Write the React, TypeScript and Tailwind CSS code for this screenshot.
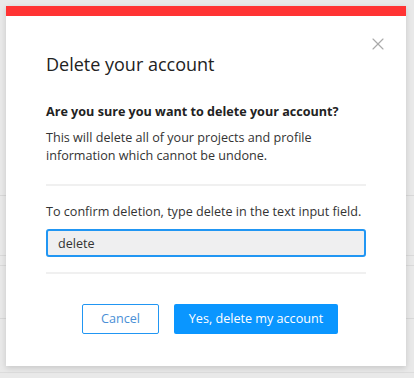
import { X } from 'lucide-react';

export default function App() {
  return (
    <div className="relative h-[378px] w-[414px] overflow-hidden bg-[#e9e9e9] font-['Open_Sans',sans-serif]">
      {/* faint page lines behind the modal */}
      <div className="absolute left-0 right-0 top-[195px] h-px bg-[#d8d8d8]" />
      <div className="absolute left-0 right-0 top-[255px] h-px bg-[#dadada]" />
      <div className="absolute left-0 right-0 top-[265px] h-px bg-[#dadada]" />
      <div className="absolute left-0 right-0 top-[318px] h-px bg-[#d8d8d8]" />
      <div className="absolute left-0 right-0 top-[372px] h-px bg-[#dcdcdc]" />

      <div className="relative ml-[6px] mt-[6px] w-[400px] bg-white shadow-[0_2px_6px_rgba(0,0,0,0.15)]">
        <div className="h-[10px] bg-[#ff3333]" />
        <button className="absolute right-[18px] top-[28px] text-[#aaaaaa]">
          <X size={20} strokeWidth={1.4} />
        </button>
        <div className="flex flex-col px-[40px] pb-[32px] pt-[34px] text-[12.6px] leading-[20px] text-[#333]">
          <h2 className="text-[18px] leading-[28px] text-[#222]">Delete your account</h2>
          <p className="mt-[24px] font-bold text-[#222]">Are you sure you want to delete your account?</p>
          <p className="mt-[7px] leading-[18px]">
            This will delete all of your projects and profile
            <br />
            information which cannot be undone.
          </p>
          <div className="mt-[19px] h-[2px] bg-[#f0f0f0]" />
          <p className="mt-[16px]">To confirm deletion, type delete in the text input field.</p>
          <input
            defaultValue="delete"
            className="mt-[7px] h-[28px] w-full rounded-[3px] border-2 border-[#2196f3] bg-[#efeff0] px-[10px] text-[12.6px] text-[#333] outline-none"
          />
          <div className="mt-[15px] h-[2px] bg-[#f0f0f0]" />
          <div className="mt-[30px] flex justify-center gap-[15px] pl-[8px]">
            <button className="h-[30px] w-[77px] rounded-[2px] border border-[#2196f3] text-[#4a8fd6]">
              Cancel
            </button>
            <button className="h-[30px] w-[164px] rounded-[2px] bg-[#0a96ff] text-white">
              Yes, delete my account
            </button>
          </div>
        </div>
      </div>
    </div>
  );
}
